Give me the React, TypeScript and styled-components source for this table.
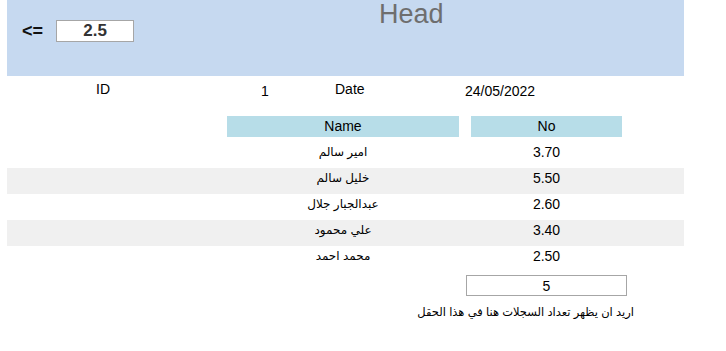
import React from 'react';
import styled, { createGlobalStyle } from 'styled-components';

const GlobalStyle = createGlobalStyle`
  body {
    margin: 0;
    background: #ffffff;
    font-family: 'Liberation Sans', Arial, 'DejaVu Sans', sans-serif;
    color: #000;
  }
`;

type Row = { name: string; no: string };

const rows: Row[] = [
  { name: 'امير سالم', no: '3.70' },
  { name: 'خليل سالم', no: '5.50' },
  { name: 'عبدالجبار جلال', no: '2.60' },
  { name: 'علي محمود', no: '3.40' },
  { name: 'محمد احمد', no: '2.50' },
];

const App = () => {
  return (
    <Page>
      <GlobalStyle />
      <Banner>
        <Filter>
          <Op>&lt;=</Op>
          <FilterBox>2.5</FilterBox>
        </Filter>
        <Title>Head</Title>
      </Banner>

      <Info>
        <InfoCell $align='center'>ID</InfoCell>
        <InfoCell $align='center' $drop>1</InfoCell>
        <InfoCell $align='left'>Date</InfoCell>
        <InfoCell $align='left' $drop>24/05/2022</InfoCell>
      </Info>

      <Table>
        <HeadRow>
          <HeadCell>Name</HeadCell>
          <HeadCell>No</HeadCell>
        </HeadRow>
        {rows.map((r, i) => (
          <BodyRow key={r.no + i} $striped={i % 2 === 1}>
            <NameCell dir='rtl'>{r.name}</NameCell>
            <NumCell>{r.no}</NumCell>
          </BodyRow>
        ))}
      </Table>

      <CountRow>
        <CountBox>{rows.length}</CountBox>
      </CountRow>
      <Note dir='rtl'>اريد ان يظهر تعداد السجلات هنا في هذا الحقل</Note>
    </Page>
  );
};
export default App;

const Page = styled.div`
  width: 677px;
  margin-left: 7px;
`;

const Banner = styled.div`
  display: grid;
  grid-template-columns: 372px 1fr;
  height: 76px;
  background: #c6d9f0;
`;

const Filter = styled.div`
  display: flex;
  align-items: center;
  gap: 13px;
  padding: 20px 0 0 15px;
  height: 22px;
`;

const Op = styled.span`
  font-size: 18px;
  font-weight: bold;
  color: #111;
  margin-top: 1px;
`;

const FilterBox = styled.div`
  width: 76px;
  height: 20px;
  border: 1px solid #a6a6a6;
  background: #fff;
  color: #333;
  font-size: 17px;
  font-weight: bold;
  line-height: 20px;
  text-align: center;
`;

const Title = styled.div`
  font-size: 27px;
  line-height: 28px;
  color: #6e6e6e;
`;

const Info = styled.div`
  display: grid;
  grid-template-columns: 192px 132px 130px 1fr;
  padding-top: 5px;
  height: 35px;
  font-size: 14px;
  line-height: 16px;
`;

const InfoCell = styled.div<{ $align: 'left' | 'center'; $drop?: boolean }>`
  text-align: ${({ $align }) => $align};
  padding-top: ${({ $drop }) => ($drop ? '2px' : '0')};
  padding-left: ${({ $align }) => ($align === 'left' ? '4px' : '0')};
`;

const Table = styled.div`
  display: flex;
  flex-direction: column;
`;

const HeadRow = styled.div`
  display: grid;
  grid-template-columns: 232px 151px;
  column-gap: 12px;
  padding-left: 220px;
  margin-bottom: 5px;
`;

const HeadCell = styled.div`
  height: 21px;
  line-height: 20px;
  background: #b7dde8;
  text-align: center;
  font-size: 14px;
`;

const BodyRow = styled.div<{ $striped: boolean }>`
  display: grid;
  grid-template-columns: 232px 151px;
  column-gap: 12px;
  padding-left: 220px;
  height: 26px;
  background: ${({ $striped }) => ($striped ? '#f0f0f0' : '#fff')};
`;

const NameCell = styled.div`
  text-align: center;
  font-size: 12px;
  line-height: 20px;
`;

const NumCell = styled.div`
  text-align: center;
  font-size: 14px;
  line-height: 20px;
`;

const CountRow = styled.div`
  display: flex;
  padding: 3px 0 0 459px;
`;

const CountBox = styled.div`
  width: 159px;
  height: 19px;
  border: 1px solid #a6a6a6;
  font-size: 14px;
  line-height: 20px;
  text-align: center;
`;

const Note = styled.div`
  width: 627px;
  margin-top: 8px;
  text-align: right;
  font-size: 11.5px;
  line-height: 16px;
`;
